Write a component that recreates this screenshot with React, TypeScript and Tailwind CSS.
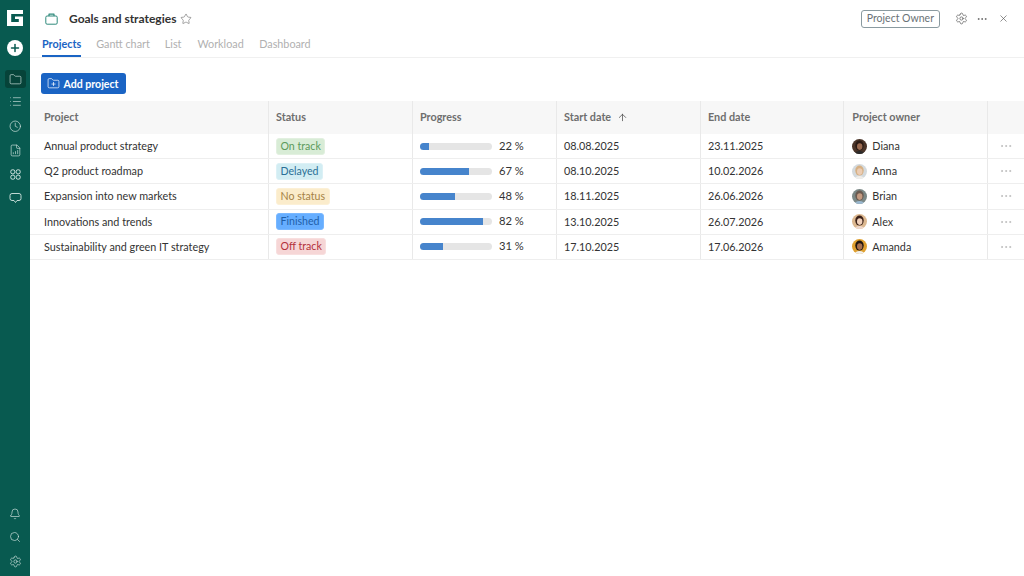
import React from "react";
import { Star, Settings, MoreHorizontal, X, Folder, FolderPlus, List, Clock, FileBarChart, Bell, Search, ArrowUp, Plus } from "lucide-react";

const rows = [
  { name: "Annual product strategy", status: "On track", cls: "bg-[#d8ecd6] text-[#5c9a5a] border-[#e2f0e0]", p: 22, w: 13, start: "08.08.2025", end: "23.11.2025", owner: "Diana", skin: "#9a6a50", hair: "#2a1a14", bg: "#4a3428", shirt: "#2a2a2a" },
  { name: "Q2 product roadmap", status: "Delayed", cls: "bg-[#d2edf3] text-[#2a6f96] border-[#dcf1f6]", p: 67, w: 68, start: "08.10.2025", end: "10.02.2026", owner: "Anna", skin: "#eccdb4", hair: "#d6b084", bg: "#d4dade", shirt: "#f0eeea" },
  { name: "Expansion into new markets", status: "No status", cls: "bg-[#fbeccb] text-[#a58245] border-[#fcf0d6]", p: 48, w: 49, start: "18.11.2025", end: "26.06.2026", owner: "Brian", skin: "#c49a80", hair: "#6a5a50", bg: "#7b8886", shirt: "#9ab8d0" },
  { name: "Innovations and trends", status: "Finished", cls: "bg-[#66aeff] text-[#1f5fa8] border-[#7ab8ff]", p: 82, w: 88, start: "13.10.2025", end: "26.07.2026", owner: "Alex", skin: "#f0d0ba", hair: "#3a2018", bg: "#dcb890", shirt: "#efd8cc" },
  { name: "Sustainability and green IT strategy", status: "Off track", cls: "bg-[#f6d6d6] text-[#b3303a] border-[#f8dfdf]", p: 31, w: 32, start: "17.10.2025", end: "17.06.2026", owner: "Amanda", skin: "#a9714e", hair: "#1e1410", bg: "#dfa030", shirt: "#f0f0f0" },
];

const col = "border-r border-[#e9e9e9] shrink-0";

function Avatar({ skin, hair, bg, shirt }: { skin: string; hair: string; bg: string; shirt: string }) {
  return (
    <svg width="15" height="15" viewBox="0 0 15 15" className="shrink-0">
      <defs>
        <clipPath id="c"><circle cx="7.5" cy="7.5" r="7.5" /></clipPath>
      </defs>
      <g clipPath="url(#c)">
        <rect width="15" height="15" fill={bg} />
        <ellipse cx="7.5" cy="6.6" rx="4.2" ry="5" fill={hair} />
        <ellipse cx="7.7" cy="7.6" rx="2.7" ry="3.3" fill={skin} />
        <ellipse cx="7.5" cy="15" rx="5" ry="3" fill={shirt} />
      </g>
    </svg>
  );
}

function Grid4() {
  return (
    <svg width="11" height="11" viewBox="0 0 11 11" fill="none" stroke="#d5e6e2" strokeWidth="1">
      <rect x="0.8" y="0.8" width="4" height="4" rx="1.6" />
      <rect x="6.2" y="0.8" width="4" height="4" rx="1.6" />
      <rect x="0.8" y="6.2" width="4" height="4" rx="1.6" />
      <rect x="6.2" y="6.2" width="4" height="4" rx="1.6" />
    </svg>
  );
}

function Chat() {
  return (
    <svg width="13" height="12" viewBox="0 0 13 12" fill="none" stroke="#d5e6e2" strokeWidth="0.9" strokeLinejoin="round">
      <path d="M3 1.5h7a2 2 0 0 1 2 2v3a2 2 0 0 1-2 2H8L6.5 10.5 5 8.5H3a2 2 0 0 1-2-2v-3a2 2 0 0 1 2-2z" />
    </svg>
  );
}

function Bag() {
  return (
    <svg width="13" height="12" viewBox="0 0 13 12" fill="none" stroke="#2f8a7c" strokeWidth="1" strokeLinejoin="round">
      <rect x="0.8" y="3" width="11.4" height="8.2" rx="1.3" />
      <path d="M4 3V1.2h5V3" strokeWidth="1.2" />
    </svg>
  );
}

export default function App() {
  const nav = "#d5e6e2";
  return (
    <div className="flex h-[576px] w-[1024px] overflow-hidden bg-white font-['Lato',sans-serif] text-[#333]">
      <aside className="flex w-[30px] shrink-0 flex-col items-center bg-[#085a50]">
        <svg width="18" height="18" viewBox="0 0 18 18" className="mt-[8.5px]">
          <path d="M1 1h16v4H5.2v8h7.6v-3H9V7.4h8V17H1z" fill="#fff" />
        </svg>
        <div className="mt-[13px] flex h-[16px] w-[16px] items-center justify-center rounded-full bg-white">
          <Plus size={12} strokeWidth={3} color="#085a50" />
        </div>
        <div className="mt-[14.5px] flex h-[18px] w-[21px] items-center justify-center rounded-[3px] bg-[#064339]">
          <Folder size={13} color={nav} strokeWidth={1.2} />
        </div>
        <div className="mt-[7px] flex h-[12px] items-center"><List size={13} color={nav} strokeWidth={1.2} /></div>
        <div className="mt-[13px] flex h-[12px] items-center"><Clock size={12.5} color={nav} strokeWidth={1.3} /></div>
        <div className="mt-[12px] flex h-[12px] items-center"><FileBarChart size={13} color={nav} strokeWidth={1.2} /></div>
        <div className="mt-[12px] flex h-[12px] items-center"><Grid4 /></div>
        <div className="mt-[12px] flex h-[12px] items-center"><Chat /></div>
        <div className="mt-auto mb-[8.5px] flex flex-col items-center gap-[11.5px]">
          <Bell size={12} color={nav} strokeWidth={1.3} />
          <Search size={12} color={nav} strokeWidth={1.3} />
          <Settings size={13} color={nav} strokeWidth={1.2} />
        </div>
      </aside>
      <main className="flex min-w-0 flex-1 flex-col">
        <header className="h-[58px] border-b border-[#f0f0f0]">
          <div className="flex h-[35px] items-center pl-[15px] pr-[15px] pt-[2px]">
            <Bag />
            <span className="ml-[11px] text-[12px] font-bold leading-none text-[#333]">Goals and strategies</span>
            <Star size={12} color="#666" strokeWidth={1.2} className="ml-[4px]" />
            <span className="ml-auto flex h-[18px] items-center rounded-[3px] border border-[#8a9aa0] px-[5px] text-[10.5px] text-[#6a7276]">Project Owner</span>
            <Settings size={13} color="#555" strokeWidth={1.3} className="ml-[15px]" />
            <MoreHorizontal size={12} color="#555" strokeWidth={1.5} className="ml-[8px]" />
            <X size={11} color="#555" strokeWidth={1.4} className="ml-[10px]" />
          </div>
          <nav className="flex h-[22px] pl-[12px] text-[10.8px] text-[#b0b0b0]">
            <span className="mr-[15px] flex h-[22px] items-center border-b-2 border-[#1a64c4] pb-[2px] font-bold text-[#1a64c4]">Projects</span>
            <span className="mr-[15px] flex items-center pb-[3px]">Gantt chart</span>
            <span className="mr-[16px] flex items-center pb-[3px]">List</span>
            <span className="mr-[15.5px] flex items-center pb-[3px]">Workload</span>
            <span className="flex items-center pb-[3px]">Dashboard</span>
          </nav>
        </header>
        <div className="pl-[11px] pt-[15px]">
          <button className="flex h-[21px] w-[85px] items-center justify-center gap-[3px] rounded-[3px] bg-[#1a64c4] pr-[1px] text-[10.6px] font-bold text-white">
            <FolderPlus size={13} strokeWidth={1.3} />
            <span className="pt-[2px]">Add project</span>
          </button>
        </div>
        <section className="mt-[7px]">
          <div className="flex h-[33px] items-stretch bg-[#f7f7f7] text-[10.8px] font-bold text-[#6e6e6e]">
            <div className={`${col} flex w-[239px] items-center pl-[14px]`}>Project</div>
            <div className={`${col} flex w-[144px] items-center pl-[7px]`}>Status</div>
            <div className={`${col} flex w-[144px] items-center pl-[7px]`}>Progress</div>
            <div className={`${col} flex w-[144px] items-center gap-[6px] pl-[7px]`}>Start date <ArrowUp size={11} color="#444" strokeWidth={1.6} /></div>
            <div className={`${col} flex w-[143.3px] items-center pl-[7px]`}>End date</div>
            <div className={`${col} flex w-[144px] items-center pl-[8px]`}>Project owner</div>
            <div className="flex-1" />
          </div>
          {rows.map((r) => (
            <div key={r.name} className="flex h-[25.2px] items-stretch border-b border-[#eeeeee] text-[10.8px] text-[#333]">
              <div className={`${col} flex w-[239px] items-center pl-[14px]`}>{r.name}</div>
              <div className={`${col} flex w-[144px] items-center pl-[7px]`}>
                <span className={`flex h-[17px] items-center rounded-[3px] border px-[3.5px] pt-[1px] text-[10.6px] ${r.cls}`}>{r.status}</span>
              </div>
              <div className={`${col} flex w-[144px] items-center pl-[7px]`}>
                <div className="h-[7px] w-[72px] overflow-hidden rounded-full bg-[#e5e5e5]">
                  <div className="h-full bg-[#4684cc]" style={{ width: `${r.w}%` }} />
                </div>
                <span className="ml-[7px] text-[11.2px]">{r.p} %</span>
              </div>
              <div className={`${col} flex w-[144px] items-center pl-[7px]`}>{r.start}</div>
              <div className={`${col} flex w-[143.3px] items-center pl-[7px]`}>{r.end}</div>
              <div className={`${col} flex w-[144px] items-center gap-[5px] pl-[8px]`}>
                <Avatar skin={r.skin} hair={r.hair} bg={r.bg} shirt={r.shirt} />
                {r.owner}
              </div>
              <div className="flex flex-1 items-center justify-center">
                <MoreHorizontal size={14} color="#b5b5b5" strokeWidth={1.3} />
              </div>
            </div>
          ))}
        </section>
      </main>
    </div>
  );
}
